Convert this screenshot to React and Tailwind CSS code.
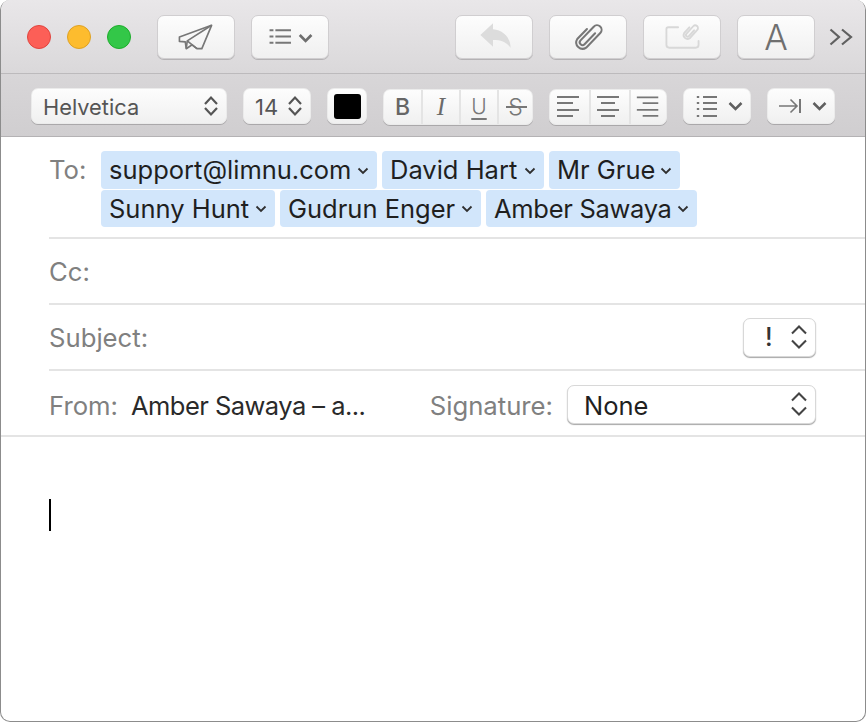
const ui = { fontFamily: 'Inter, "Noto Sans", "Liberation Sans", sans-serif' };

function Btn({ w, children, className = "" }) {
  return (
    <div className={`h-[44px] shrink-0 rounded-[7px] border border-[#d0ced0] bg-linear-to-b from-[#fdfdfd] to-[#f0f0f0] shadow-[0_1px_0_#b4b2b4] flex items-center justify-center ${w} ${className}`}>
      {children}
    </div>
  );
}

function FBtn({ w, children, className = "" }) {
  return (
    <div className={`h-[36px] shrink-0 rounded-[7px] border border-[#ebebeb] bg-linear-to-b from-[#fdfdfd] to-[#f0f0f0] shadow-[0_1px_0_#aaa8aa] flex items-center overflow-hidden ${w} ${className}`}>
      {children}
    </div>
  );
}

function Stepper({ className = "" }) {
  return (
    <svg width="16" height="24" viewBox="0 0 16 24" className={`shrink-0 ${className}`} fill="none" stroke="#555555" strokeWidth="2.2">
      <path d="M2 10 L8 3.5 L14 10" />
      <path d="M2 14 L8 20.5 L14 14" />
    </svg>
  );
}

function TallStepper() {
  return (
    <svg width="16" height="28" viewBox="0 0 16 28" className="shrink-0" fill="none" stroke="#444444" strokeWidth="2.1">
      <path d="M1 10.5 L8 3.5 L15 10.5" />
      <path d="M1 17.5 L8 24.5 L15 17.5" />
    </svg>
  );
}

function PlaneIcon() {
  return (
    <svg width="78" height="44" viewBox="0 0 78 44" fill="none" stroke="#777777" strokeWidth="1.7" strokeLinejoin="round">
      <path d="M55 10 L22 22 V26.5 L28 27 L29 34 L35 30 L40 34 H45 Z" />
      <path d="M55 10 L30 26 L29 34 M30 26 L40 34" />
    </svg>
  );
}

function ListIcon() {
  return (
    <svg width="78" height="44" viewBox="0 0 78 44" fill="none">
      <g stroke="#777777" strokeWidth="2">
        <path d="M18 15 H22 M24 15 H40 M18 21.5 H22 M24 21.5 H40 M18 28 H22 M24 28 H40" />
      </g>
      <path d="M49 20 L55 26 L61 20" stroke="#6e6e6e" strokeWidth="2.8" />
    </svg>
  );
}

function ReplyIcon() {
  return (
    <svg width="78" height="44" viewBox="0 0 78 44">
      <path d="M25 20 L38 8 V14 C48 15 56 22 56 33 C52 27 46 25 38 25 V32 Z" fill="#dcdcdc" />
    </svg>
  );
}

function ClipIcon() {
  return (
    <svg width="78" height="44" viewBox="0 0 78 44" fill="none" stroke="#777777" strokeWidth="1.6" strokeLinecap="round">
      <g transform="translate(39 22) rotate(44) scale(1.3)">
        <path d="M2 -6 V6 A2.2 2.2 0 0 1 -2.4 6 V-9 A3.6 3.6 0 0 1 4.8 -9 V7 A5 5 0 0 1 -5 7 V-4" />
      </g>
    </svg>
  );
}

function PhotoIcon() {
  return (
    <svg width="78" height="44" viewBox="0 0 78 44" fill="none" stroke="#d8d8d8" strokeWidth="1.9" strokeLinecap="round">
      <path d="M35 12 H25 Q23 12 23 14 V30 Q23 33 26 33 H53 Q56 33 56 30 V26" />
      <g transform="translate(47.5 17) rotate(42)">
        <path d="M1.6 -4 V4 A1.7 1.7 0 0 1 -1.8 4 V-6.5 A2.8 2.8 0 0 1 3.8 -6.5 V5 A4 4 0 0 1 -4 5 V-3" />
      </g>
    </svg>
  );
}

function FormatIcons({ kind }) {
  const lines = {
    left: ["M7 8 H29", "M7 14 H23", "M7 21 H29", "M7 27 H23"],
    center: ["M6 8 H28", "M10 14 H24", "M6 21 H28", "M10 27 H24"],
    right: ["M6 8 H28", "M12 14 H28", "M6 21 H28", "M12 27 H28"],
  }[kind];
  return (
    <svg width="38" height="36" viewBox="0 0 38 36" fill="none" stroke="#777777" strokeWidth="1.8">
      {lines.map((d) => (
        <path key={d} d={d} />
      ))}
    </svg>
  );
}

function Token({ name, w, textClass = "" }) {
  return (
    <div className={`h-[37.5px] rounded-[4px] bg-[#d2e6fb] flex items-center pl-[8px] pr-[8px] text-[#1f1f1f] text-[25.5px] leading-none ${w}`}>
      <span className={`whitespace-nowrap ${textClass}`}>{name}</span>
      <svg width="12" height="8" viewBox="0 0 12 8" className="ml-auto mt-[2px] shrink-0" fill="none" stroke="#2f2f2f" strokeWidth="1.8">
        <path d="M1.5 1.5 L6 6 L10.5 1.5" />
      </svg>
    </div>
  );
}

export default function App() {
  return (
    <div className="w-[866px] h-[722px] bg-white" style={ui}>
      <div className="w-full h-full rounded-[10px] border border-t-0 border-[#8c8c8c] overflow-hidden flex flex-col bg-white">
        <div className="h-[74px] shrink-0 bg-linear-to-b from-[#e9e7e9] to-[#dad8da] border-b border-[#bcbabc] flex items-start pt-[15px] pl-[26px] pr-[12px]">
          <div className="flex gap-[16px] h-[44px] items-center">
            <span className="w-[24px] h-[24px] rounded-full bg-[#fc5f57] border border-[#e0443e]" />
            <span className="w-[24px] h-[24px] rounded-full bg-[#fdbc2e] border border-[#dea123]" />
            <span className="w-[24px] h-[24px] rounded-full bg-[#33c748] border border-[#1dad2b]" />
          </div>
          <Btn w="w-[78px]" className="ml-[26px]"><PlaneIcon /></Btn>
          <Btn w="w-[78px]" className="ml-[16px]"><ListIcon /></Btn>
          <Btn w="w-[78px]" className="ml-auto"><ReplyIcon /></Btn>
          <Btn w="w-[78px]" className="ml-[16px]"><ClipIcon /></Btn>
          <Btn w="w-[78px]" className="ml-[16px]"><PhotoIcon /></Btn>
          <Btn w="w-[78px]" className="ml-[16px]">
            <span className="text-[35px] font-light leading-none text-[#6f6f6f]">A</span>
          </Btn>
          <svg width="24" height="44" viewBox="0 0 24 44" className="ml-[14px] shrink-0" fill="none" stroke="#606060" strokeWidth="2.2">
            <path d="M1.5 14.5 L10 22 L1.5 29.5 M13 14.5 L22 22 L13 29.5" />
          </svg>
        </div>

        <div className="h-[63px] shrink-0 bg-linear-to-b from-[#d8d6d8] to-[#d0ced0] border-b border-[#b4b2b4] flex items-start pt-[14px] pl-[30px]">
          <FBtn w="w-[196px]" className="pl-[11px] pr-[7px] justify-between">
            <span className="text-[21.8px] pt-[2px] text-[#555555]">Helvetica</span>
            <Stepper />
          </FBtn>
          <FBtn w="w-[68px]" className="ml-[16px] pl-[11px] pr-[7px] justify-between">
            <span className="text-[22px] pt-[2px] text-[#555555]">14</span>
            <Stepper />
          </FBtn>
          <FBtn w="w-[40px]" className="ml-[16px] justify-center">
            <span className="w-[27px] h-[25px] rounded-[3px] bg-black" />
          </FBtn>
          <FBtn w="w-[150px]" className="ml-[16px] mt-[1px]">
            <span className="w-[37px] h-full flex items-center justify-center text-[23px] font-medium text-[#666666]">B</span>
            <span className="w-[38px] h-full border-l-2 border-[#e4e4e4] flex items-center justify-center text-[25px] italic text-[#6a6a6a]" style={{ fontFamily: '"Liberation Serif", serif' }}>I</span>
            <span className="w-[38px] h-full border-l-2 border-[#e4e4e4] flex items-center justify-center text-[21px] font-light underline underline-offset-[4px] text-[#777777]">U</span>
            <span className="relative flex-1 h-full border-l-2 border-[#e4e4e4] flex items-center justify-center text-[23px] font-light text-[#777777]">
              S
              <span className="absolute left-[7px] top-[16px] w-[21px] h-[2px] bg-[#777777]" />
            </span>
          </FBtn>
          <FBtn w="w-[118px]" className="ml-[16px] mt-[1px]">
            <span className="w-[39px] h-full shrink-0 flex items-center"><FormatIcons kind="left" /></span>
            <span className="w-[40px] h-full shrink-0 border-l-2 border-[#e4e4e4] flex items-center"><FormatIcons kind="center" /></span>
            <span className="w-[39px] h-full shrink-0 border-l-2 border-[#e4e4e4] flex items-center"><FormatIcons kind="right" /></span>
          </FBtn>
          <FBtn w="w-[68px]" className="ml-[16px]">
            <svg width="68" height="36" viewBox="0 0 68 36" fill="none" className="shrink-0">
              <path d="M14 8 V10 M14 14 V16 M14 20 V22 M14 27 V29" stroke="#777777" strokeWidth="2.4" />
              <path d="M19 9 H33 M19 15 H33 M19 21 H33 M19 28 H33" stroke="#777777" strokeWidth="1.9" />
              <path d="M45.5 15 L51.5 21 L57.5 15" stroke="#5f5f5f" strokeWidth="2.5" />
            </svg>
          </FBtn>
          <FBtn w="w-[68px]" className="ml-[16px]">
            <svg width="68" height="36" viewBox="0 0 68 36" fill="none" className="shrink-0">
              <path d="M11 18 H29 M22.5 11.5 L29 18 L22.5 24.5" stroke="#777777" strokeWidth="1.6" />
              <path d="M32 11 V25" stroke="#777777" strokeWidth="2" />
              <path d="M45.5 15 L51.5 21 L57.5 15" stroke="#5f5f5f" strokeWidth="2.5" />
            </svg>
          </FBtn>
        </div>

        <div className="ml-[48px] h-[102px] shrink-0 border-b-2 border-[#e4e4e4] flex items-start pt-[14px]">
          <span className="w-[52px] shrink-0 text-[25.7px] leading-[38px] text-[#808080]">To:</span>
          <div className="flex flex-wrap gap-x-[5px] gap-y-[0.5px] w-[700px]">
            <Token name="support@limnu.com" w="w-[276px]" />
            <Token name="David Hart" w="w-[162px]" />
            <Token name="Mr Grue" w="w-[131px]" />
            <div className="basis-full h-0" />
            <Token name="Sunny Hunt" w="w-[174px]" />
            <Token name="Gudrun Enger" w="w-[201px]" />
            <Token name="Amber Sawaya" w="w-[211px]" textClass="tracking-[-0.3px]" />
          </div>
        </div>

        <div className="ml-[48px] h-[66px] shrink-0 border-b-2 border-[#e4e4e4] flex items-center">
          <span className="pt-[2px] text-[25.7px] text-[#808080]">Cc:</span>
        </div>

        <div className="ml-[48px] h-[66px] shrink-0 border-b-2 border-[#e4e4e4] flex items-center justify-between pr-[49px]">
          <span className="pt-[2px] text-[25.7px] text-[#808080]">Subject:</span>
          <div className="w-[73px] h-[39px] rounded-[7px] border border-[#d8d8d8] bg-white shadow-[0_1px_1px_#a8a8a8] flex items-center justify-between pl-[21px] pr-[8px]">
            <span className="text-[25px] text-[#333333] leading-none font-medium">!</span>
            <TallStepper />
          </div>
        </div>

        <div className="h-[66px] shrink-0 border-b-2 border-[#e4e4e4] flex items-center pl-[48px] pr-[49px]">
          <span className="pt-[6px] text-[25.7px] text-[#808080]">From:</span>
          <span className="pt-[6px] ml-[13px] text-[25.5px] tracking-[-0.54px] text-[#2a2a2a]">Amber Sawaya – a...</span>
          <span className="pt-[6px] ml-auto text-[25.7px] text-[#808080]">Signature:</span>
          <div className="mt-[2px] ml-[14px] w-[249px] h-[39px] rounded-[7px] border border-[#d8d8d8] bg-white shadow-[0_1px_1px_#a8a8a8] flex items-center justify-between pl-[16px] pr-[8px]">
            <span className="pt-[4px] text-[25.5px] text-[#1f1f1f]">None</span>
            <TallStepper />
          </div>
        </div>

        <div className="flex-1 pl-[48px] pt-[62px]">
          <div className="w-[2px] h-[32px] bg-black" />
        </div>
      </div>
    </div>
  );
}
